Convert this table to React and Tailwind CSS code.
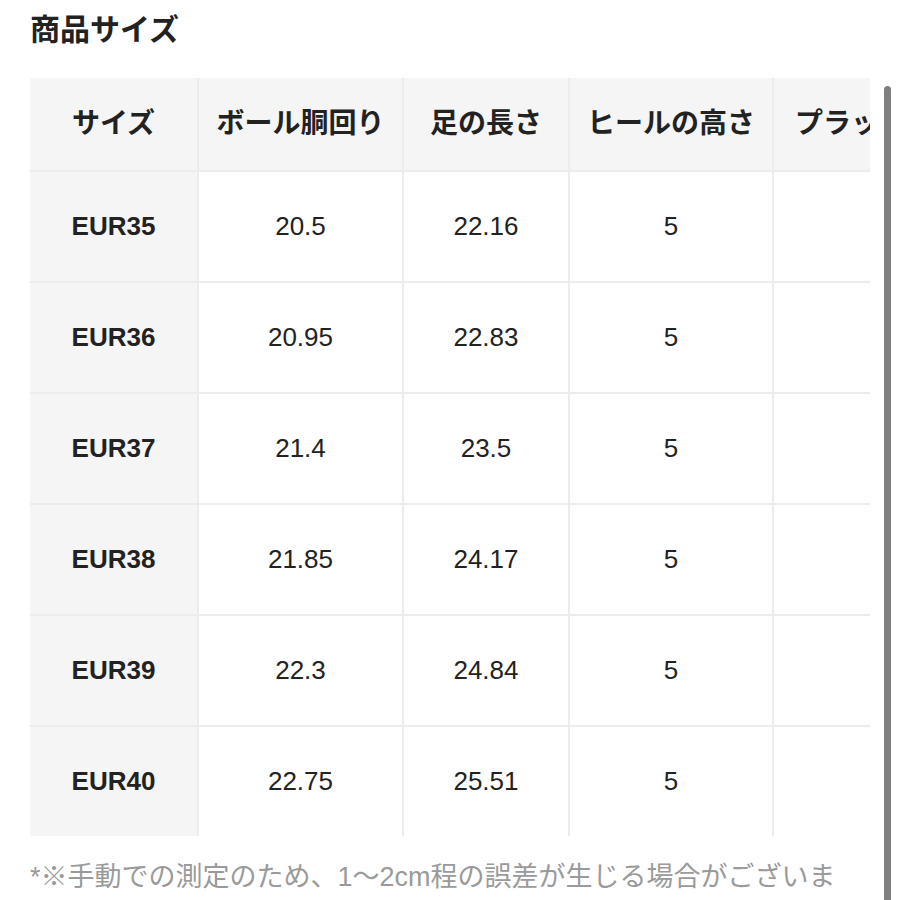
import React from "react";

const headers = ["サイズ", "ボール胴回り", "足の長さ", "ヒールの高さ", "プラットフォーム"];

const rows = [
  ["EUR35", "20.5", "22.16", "5", ""],
  ["EUR36", "20.95", "22.83", "5", ""],
  ["EUR37", "21.4", "23.5", "5", ""],
  ["EUR38", "21.85", "24.17", "5", ""],
  ["EUR39", "22.3", "24.84", "5", ""],
  ["EUR40", "22.75", "25.51", "5", ""],
];

export default function App() {
  return (
    <div
      className="relative w-[900px] h-[900px] overflow-hidden bg-white text-[#222]"
      style={{ fontFamily: '"Liberation Sans", "Noto Sans CJK JP", sans-serif' }}
    >
      <div className="pl-[30px] pt-[10px] w-[870px]">
        <h1 className="text-[30px] leading-[40px] font-bold">商品サイズ</h1>

        <div className="mt-[28px] w-[840px] overflow-hidden">
          <div className="grid grid-cols-[167px_203px_164px_202px_240px] gap-[2px] bg-[#ececec] w-max">
            {headers.map((h, i) => (
              <div
                key={h}
                className={
                  i === 4
                    ? "h-[92px] bg-[#f5f5f5] flex items-center justify-start pl-[21px] text-[28px] font-bold whitespace-nowrap overflow-hidden"
                    : "h-[92px] bg-[#f5f5f5] flex items-center justify-center px-[18px] text-[28px] font-bold whitespace-nowrap overflow-hidden"
                }
              >
                {h}
              </div>
            ))}
            {rows.map((r) =>
              r.map((c, i) => (
                <div
                  key={r[0] + i}
                  className={
                    i === 0
                      ? "h-[109px] bg-[#f5f5f5] flex items-center justify-center text-[26px] font-bold"
                      : "h-[109px] bg-white flex items-center justify-center text-[26px]"
                  }
                >
                  {c}
                </div>
              ))
            )}
          </div>
        </div>

        <p className="mt-[22px] w-[840px] text-[27px] leading-[38px] text-[#9a9a9a]">
          *※手動での測定のため、1〜2cm程の誤差が生じる場合がございます。
        </p>
      </div>

      <div className="absolute left-[884px] top-[86px] w-[7px] h-[830px] rounded-full bg-[#7f7f7f]" />
    </div>
  );
}
